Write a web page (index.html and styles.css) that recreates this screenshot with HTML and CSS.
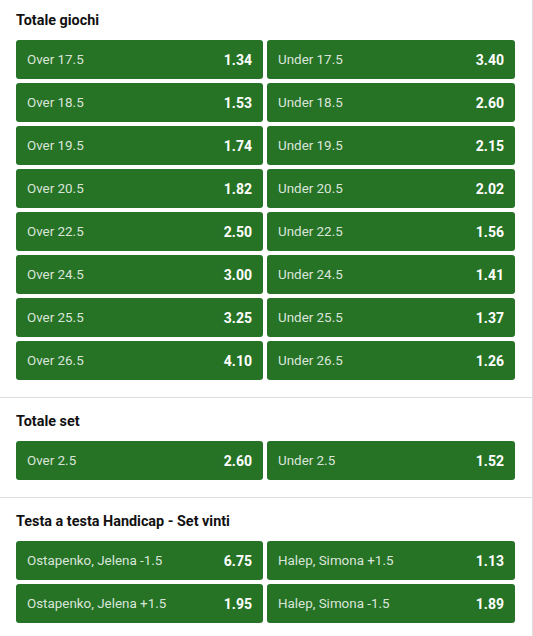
FILE: index.html
```html
<!DOCTYPE html>
<html lang="it">
<head>
<meta charset="utf-8">
<title>Mercati</title>
<link rel="stylesheet" href="styles.css">
</head>
<body>
<div class="panel">
  <section class="market first">
    <h2 class="title">Totale giochi</h2>
    <div class="grid">
      <button class="odd"><span class="label">Over 17.5</span><span class="price">1.34</span></button>
      <button class="odd"><span class="label">Under 17.5</span><span class="price">3.40</span></button>
      <button class="odd"><span class="label">Over 18.5</span><span class="price">1.53</span></button>
      <button class="odd"><span class="label">Under 18.5</span><span class="price">2.60</span></button>
      <button class="odd"><span class="label">Over 19.5</span><span class="price">1.74</span></button>
      <button class="odd"><span class="label">Under 19.5</span><span class="price">2.15</span></button>
      <button class="odd"><span class="label">Over 20.5</span><span class="price">1.82</span></button>
      <button class="odd"><span class="label">Under 20.5</span><span class="price">2.02</span></button>
      <button class="odd"><span class="label">Over 22.5</span><span class="price">2.50</span></button>
      <button class="odd"><span class="label">Under 22.5</span><span class="price">1.56</span></button>
      <button class="odd"><span class="label">Over 24.5</span><span class="price">3.00</span></button>
      <button class="odd"><span class="label">Under 24.5</span><span class="price">1.41</span></button>
      <button class="odd"><span class="label">Over 25.5</span><span class="price">3.25</span></button>
      <button class="odd"><span class="label">Under 25.5</span><span class="price">1.37</span></button>
      <button class="odd"><span class="label">Over 26.5</span><span class="price">4.10</span></button>
      <button class="odd"><span class="label">Under 26.5</span><span class="price">1.26</span></button>
    </div>
  </section>
  <section class="market">
    <h2 class="title">Totale set</h2>
    <div class="grid">
      <button class="odd"><span class="label">Over 2.5</span><span class="price">2.60</span></button>
      <button class="odd"><span class="label">Under 2.5</span><span class="price">1.52</span></button>
    </div>
  </section>
  <section class="market last">
    <h2 class="title">Testa a testa Handicap - Set vinti</h2>
    <div class="grid">
      <button class="odd"><span class="label">Ostapenko, Jelena -1.5</span><span class="price">6.75</span></button>
      <button class="odd"><span class="label">Halep, Simona +1.5</span><span class="price">1.13</span></button>
      <button class="odd"><span class="label">Ostapenko, Jelena +1.5</span><span class="price">1.95</span></button>
      <button class="odd"><span class="label">Halep, Simona -1.5</span><span class="price">1.89</span></button>
    </div>
  </section>
</div>
</body>
</html>
```
FILE: styles.css
```css
html, body {
  margin: 0;
  padding: 0;
  background: #ffffff;
}
body {
  font-family: Roboto, "Liberation Sans", Arial, sans-serif;
  color: #111;
}
.panel {
  width: 532px;
  min-height: 636px;
  border-right: 1px solid #dedede;
  box-sizing: content-box;
}
.market {
  padding: 14px 17px 17px 16px;
  border-top: 1px solid #dedede;
}
.market.first {
  padding-top: 11px;
  border-top: none;
}
.market.last {
  padding-bottom: 12px;
}
.title {
  margin: 0 0 9px 0;
  font-size: 14.4px;
  line-height: 20px;
  font-weight: 700;
  color: #111;
}
.grid {
  display: grid;
  grid-template-columns: 247px 248px;
  column-gap: 4px;
  row-gap: 4px;
}
.odd {
  display: flex;
  align-items: center;
  justify-content: space-between;
  height: 39px;
  margin: 0;
  padding: 0 11px 0 11px;
  border: none;
  border-radius: 3px;
  background: #267326;
  font-family: inherit;
  text-align: left;
}
.label {
  font-size: 13.4px;
  color: rgba(255, 255, 255, 0.84);
}
.price {
  font-size: 14px;
  font-weight: 700;
  color: #ffffff;
}
```
